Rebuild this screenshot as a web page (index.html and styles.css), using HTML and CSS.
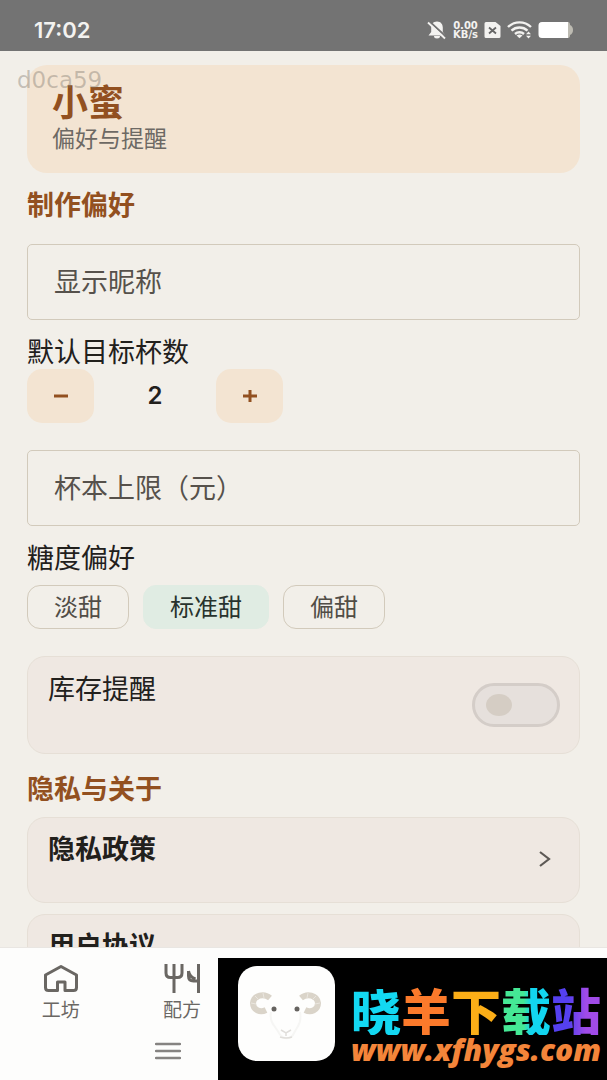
FILE: index.html
```html
<!DOCTYPE html>
<html lang="zh-CN">
<head>
<meta charset="utf-8">
<meta name="viewport" content="width=device-width, initial-scale=1">
<title>小蜜</title>
<link rel="stylesheet" href="styles.css">
</head>
<body>
<div class="app">
  <header class="status">
    <span class="clock">17:02</span>
    <div class="status-icons">
      <svg width="20" height="20" viewBox="0 0 20 20"><path d="M10 1.500c-4 0-5.800 3-5.800 6v4.500L1.500 15.500h17l-2.700-3.500V7.500c0-3-1.800-6-5.800-6zM7 16h6a3 2.500 0 0 1-6 0z" fill="#f3f2f0"/><path d="M3 2l17 15.500" stroke="#737373" stroke-width="2"/><path d="M1 2.500l17 16" stroke="#f3f2f0" stroke-width="1.800"/></svg>
      <span class="speed"><span>0.00</span><span>KB/s</span></span>
      <svg width="17" height="18" viewBox="0 0 17 18"><path d="M2 1h9.500L16.500 5v10.500a1.500 1.500 0 0 1-1.500 1.500H2a1.500 1.500 0 0 1-1.500-1.500v-13A1.500 1.500 0 0 1 2 1z" fill="#f3f2f0"/><path d="M5 6.500l7 6M12 6.500l-7 6" stroke="#666" stroke-width="1.800"/></svg>
      <svg width="25" height="18" viewBox="0 0 25 18"><g fill="none" stroke="#f3f2f0" stroke-width="2.400"><path d="M1 6C7.500-.2 17.500-.2 24 6"/><path d="M4.500 9.700c4.500-4.200 11.500-4.200 16 0"/><path d="M8 13c2.500-2.300 6.500-2.300 9 0"/></g><path d="M9.500 14.500a5 5 0 0 1 6 0l-3 2.800z" fill="#f3f2f0"/><path d="M19 13.300l2.500-2.700 2.500 2.700zM19 14.700l2.500 2.700 2.500-2.700z" fill="#f3f2f0"/></svg>
      <svg width="36" height="18" viewBox="0 0 36 18"><path d="M30 1c1.500 0 2 1 2 3 2 1 3 2.500 3 5s-1 4-3 5c0 2-.5 3-2 3z" fill="#bdbbb2"/><path d="M4 1h26v16H4a3.500 3.500 0 0 1-3.500-3.500v-9A3.500 3.500 0 0 1 4 1z" fill="#fff"/></svg>
    </div>
  </header>

  <main class="content">
    <section class="hero">
      <h1>小蜜</h1>
      <p>偏好与提醒</p>
    </section>
    <h2 class="section-title">制作偏好</h2>
    <input class="field" type="text" placeholder="显示昵称" aria-label="显示昵称">
    <div class="group">
      <span class="label" id="cups">默认目标杯数</span>
      <div class="stepper" role="group" aria-labelledby="cups">
        <button class="step" type="button" aria-label="减少"><svg width="16" height="16" viewBox="0 0 16 16"><path d="M1 8h14"/></svg></button>
        <output class="count">2</output>
        <button class="step" type="button" aria-label="增加"><svg width="16" height="16" viewBox="0 0 16 16"><path d="M1 8h14M8 2v12"/></svg></button>
      </div>
    </div>
    <input class="field" type="text" inputmode="decimal" placeholder="杯本上限（元）" aria-label="杯本上限（元）">
    <div class="group">
      <span class="label" id="sugar">糖度偏好</span>
      <div class="chips" role="group" aria-labelledby="sugar">
        <button class="chip" type="button">淡甜</button>
        <button class="chip selected" type="button" aria-pressed="true">标准甜</button>
        <button class="chip" type="button">偏甜</button>
      </div>
    </div>
    <div class="card card-switch">
      <label for="stock">库存提醒</label>
      <input class="switch" id="stock" type="checkbox" role="switch">
    </div>
    <h2 class="section-title about">隐私与关于</h2>
    <div class="links">
      <a class="card card-link" href="#privacy">隐私政策<svg width="12" height="18" viewBox="0 0 12 18"><path d="M1 2l9 7-9 7" fill="none" stroke="#5d5955" stroke-width="2.200"/></svg></a>
      <a class="card card-link" href="#terms">用户协议<svg width="12" height="18" viewBox="0 0 12 18"><path d="M1 2l9 7-9 7" fill="none" stroke="#5d5955" stroke-width="2.200"/></svg></a>
    </div>
  </main>

  <nav class="tabs">
    <div class="tab-row">
      <a class="tab" href="#workshop">
        <svg width="38" height="32" viewBox="0 0 38 32"><path d="M3.500 12L19 3.500 34.500 12v12.500q0 3-3 3H23v-8.500h-7.500v8.500h-9q-3 0-3-3z"/></svg>
        工坊
      </a>
      <a class="tab" href="#recipes">
        <svg width="38" height="32" viewBox="0 0 38 32"><path d="M3 1v9q0 4.500 4.500 4.500h7q4.500 0 4.500-4.500V1M11 1v29M35.500 1v29M25.500 8v5q0 5 5 5h5M25.500 8q1 6 7 8"/></svg>
        配方
      </a>
    </div>
    <button class="menu" type="button" aria-label="菜单"><svg width="26" height="18" viewBox="0 0 26 18"><path d="M1 2h24M1 9h24M1 16h24"/></svg></button>
  </nav>

  <span class="device-id">d0ca59</span>
  <a class="banner" href="#site">
    <svg class="logo" width="97" height="96" viewBox="0 0 97 96">
      <rect x="0" y="1" width="97" height="95" rx="19" fill="#fefefd"/>
      <path d="M32 33c-6-5-16-3-17 5 0 7 7 10 13 7" fill="none" stroke="#dad4c9" stroke-width="6"/>
      <path d="M63 33c6-5 16-3 17 5 0 7-7 10-13 7" fill="none" stroke="#dad4c9" stroke-width="6"/>
      <path d="M13 38l5 1M17 31l4 4M25 28l1 5M82 38l-5 1M78 31l-4 4M70 28l-1 5" stroke="#eae6df" stroke-width="1"/>
      <path d="M33 47c-2 11 5 15 8 21 4 7 12 7 15 0 3-6 8-10 6-21" fill="none" stroke="#f6f6f4" stroke-width="2"/>
      <circle cx="36" cy="44" r="2.500" fill="#66635f"/><circle cx="59" cy="44" r="2.500" fill="#66635f"/>
      <path d="M43 65l5 3 5-3M48 67v4M42 72q6 2 12 0" fill="none" stroke="#e0deda" stroke-width="1.500"/>
    </svg>
    <span class="brand">
      <span class="name"><span class="cyan">晓</span><span class="orange">羊</span><span class="amber">下</span><span class="green">载</span><span class="violet">站</span></span>
      <span class="site">www.xfhygs.com</span>
    </span>
  </a>
</div>
</body>
</html>
```
FILE: styles.css
```css
* { box-sizing: border-box; }
body {
  margin: 0;
  background: #f2efe9;
  color: #22201c;
  font-family: "Noto Sans CJK SC", sans-serif;
}
svg { display: block; flex: none; }
button, input { font: inherit; margin: 0; }
a { color: inherit; text-decoration: none; }
.app {
  position: relative;
  display: flex;
  flex-direction: column;
  height: 100vh;
  overflow: hidden;
}
.status {
  flex: none;
  display: flex;
  align-items: center;
  justify-content: space-between;
  height: 51px;
  padding: 8px 33px 0 34px;
  background: #737373;
  color: #f3f2f0;
}
.clock { font: 600 22px/22px Inter, sans-serif; }
.status-icons { display: flex; align-items: center; gap: 6px; }
.speed {
  display: flex;
  flex-direction: column;
  align-items: center;
  font: 700 10px/9px "DejaVu Sans", sans-serif;
}
.content {
  flex: 1;
  min-height: 0;
  overflow: hidden;
  padding: 14px 27px 0;
}
.hero {
  padding: 14px 25px 19px;
  border-radius: 20px;
  background: #f3e4d2;
}
.hero h1 { margin: 0; font-size: 36px; line-height: 42px; font-weight: 700; color: #925020; }
.hero p { margin: 0; font-size: 23px; line-height: 33px; color: #6d6964; }
.section-title {
  margin: 14px 0 24px;
  font-size: 27px;
  line-height: 33px;
  font-weight: 700;
  color: #925020;
}
.section-title.about { margin: 17px 0 13px; }
.field {
  display: block;
  width: 100%;
  height: 76px;
  padding: 0 26px 4px;
  border: 1px solid #d2cabb;
  border-radius: 5px;
  background: transparent;
  color: #22201c;
  font-size: 27px;
}
.field::placeholder { color: #56514b; opacity: 1; }
.group { margin: 14px 0 27px; }
.label { display: block; font-size: 27px; line-height: 33px; }
.stepper { display: flex; align-items: center; padding-top: 2px; }
.step {
  display: grid;
  place-items: center;
  width: 67px;
  height: 54px;
  padding: 0;
  border: 0;
  border-radius: 15px;
  background: #f3e4d2;
}
.step path { stroke: #925020; stroke-width: 3; }
.count { width: 122px; text-align: center; font: 600 24px/32px Inter, sans-serif; }
.chips { display: flex; gap: 14px; padding-top: 12px; }
.chip {
  height: 44px;
  padding: 0 26px 2px;
  border: 1px solid #d2cabb;
  border-radius: 13px;
  background: transparent;
  color: #514d46;
  font-size: 24px;
  line-height: 32px;
}
.chip.selected { border-color: #e0ece3; background: #e0ece3; color: #28332d; }
.card {
  display: flex;
  border: 1px solid #e6dfd6;
  border-radius: 18px;
  background: #efe8e2;
  font-size: 27px;
  line-height: 33px;
}
.card-switch {
  justify-content: space-between;
  padding: 14px 19px 26px 20px;
}
.switch {
  appearance: none;
  display: flex;
  align-items: center;
  width: 88px;
  height: 44px;
  margin-top: 12px;
  padding-left: 11px;
  border: 3px solid #d4cdc8;
  border-radius: 22px;
  background: #e6e0dc;
}
.switch::before { content: ""; width: 26px; height: 22px; border-radius: 50%; background: #d5cdc4; }
.switch:checked { justify-content: flex-end; padding-right: 11px; }
.links { display: flex; flex-direction: column; gap: 11px; }
.card-link {
  justify-content: space-between;
  padding: 13px 28px 15px 20px;
  min-height: 86px;
  font-weight: 700;
}
.card-link svg { align-self: center; }
.tabs {
  flex: none;
  padding: 15px 0 20px;
  border-top: 1px solid #e9e6e2;
  background: #fdfdfc;
}
.tab-row { display: grid; grid-template-columns: repeat(5, 1fr); }
.tab {
  display: flex;
  flex-direction: column;
  align-items: center;
  font-size: 19px;
  line-height: 27px;
  color: #6a6763;
}
.tab path { fill: none; stroke: #6a6763; stroke-width: 3; stroke-linejoin: round; }
.menu {
  display: block;
  margin: 20px 0 0 155px;
  padding: 0;
  border: 0;
  background: transparent;
}
.menu path { stroke: #858381; stroke-width: 2.5; stroke-linecap: round; }
.device-id {
  position: absolute;
  top: 66px;
  left: 17px;
  font: 23px/28px "DejaVu Sans", sans-serif;
  color: rgba(120, 112, 102, .38);
}
.banner {
  position: absolute;
  right: 0;
  bottom: 0;
  display: flex;
  align-items: flex-start;
  gap: 16px;
  width: 389px;
  height: 122px;
  padding: 7px 4px 0 20px;
  background: #000;
}
.brand { display: flex; flex-direction: column; padding-top: 18px; }
.name { display: flex; font-size: 50px; line-height: 52px; font-weight: 900; }
.name span { background-clip: text; -webkit-background-clip: text; color: transparent; }
.name .cyan { background-image: linear-gradient(#13d8f2, #13d8f2); }
.name .orange { background-image: linear-gradient(#fb7a2b, #fb7a2b); }
.name .amber { background-image: linear-gradient(#fcae17, #fcae17); }
.name .green { background-image: linear-gradient(90deg, #45e895 45%, #12d5f0 60%); }
.name .violet { background-image: linear-gradient(90deg, #5540f0 35%, #a04be8 70%); }
.site { font: italic 800 30px/30px "Open Sans", sans-serif; color: #f4853a; }
```
